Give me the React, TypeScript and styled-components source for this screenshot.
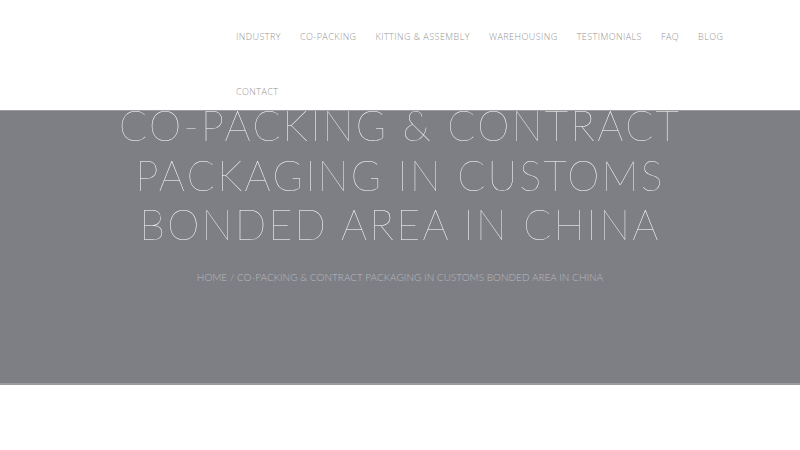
import React from "react";
import styled, { createGlobalStyle } from "styled-components";

const Global = createGlobalStyle`
  html, body { margin: 0; padding: 0; background: #fff; }
  body { font-family: "Lato", "Liberation Sans", sans-serif; }
`;

const Page = styled.div`
  width: 800px;
  min-height: 450px;
  background: #fff;
`;

const Header = styled.header`
  height: 110px;
  background: #fff;
  display: flex;
  padding-left: 226.5px;
  position: relative;
  z-index: 2;
`;

const Nav = styled.nav`
  width: 520px;
  display: flex;
  flex-wrap: wrap;
  align-content: flex-start;
`;

const NavItem = styled.a`
  display: block;
  padding: 0 9.5px;
  height: 55px;
  line-height: 73px;
  font-family: "Open Sans", "Liberation Sans", sans-serif;
  font-weight: 300;
  font-size: 9px;
  letter-spacing: 0.45px;
  color: #949494;
  text-transform: uppercase;
  text-decoration: none;
  white-space: nowrap;
`;

const Hero = styled.section`
  height: 275px;
  background: #7e7f85;
  border-top: 1px solid #9a9b9f;
  border-bottom: 2px solid #9a9b9f;
  box-sizing: border-box;
  display: flex;
  flex-direction: column;
  align-items: center;
`;

const Title = styled.h1`
  margin: -10px 0 0;
  font-family: "Lato", "Liberation Sans", sans-serif;
  font-weight: 100;
  font-size: 41px;
  line-height: 49.5px;
  letter-spacing: 2.4px;
  color: #fff;
  text-align: center;
  text-transform: uppercase;
  position: relative;
  z-index: 1;
  will-change: transform;
`;

const Crumbs = styled.div`
  margin-top: 21px;
  font-family: "Lato", "Liberation Sans", sans-serif;
  font-weight: 300;
  font-size: 10px;
  letter-spacing: 0;
  color: #b8b9bd;
  text-transform: uppercase;
`;

const items = [
  "Industry",
  "Co-Packing",
  "Kitting & Assembly",
  "Warehousing",
  "Testimonials",
  "FAQ",
  "Blog",
  "Contact",
];

export default function App() {
  return (
    <Page>
      <Global />
      <Header>
        <Nav>
          {items.map((t) => (
            <NavItem key={t} href="#">
              {t}
            </NavItem>
          ))}
        </Nav>
      </Header>
      <Hero>
        <Title>
          Co-Packing &amp; Contract
          <br />
          Packaging in Customs
          <br />
          Bonded Area in China
        </Title>
        <Crumbs>Home / Co-Packing &amp; Contract Packaging in Customs Bonded Area in China</Crumbs>
      </Hero>
    </Page>
  );
}
